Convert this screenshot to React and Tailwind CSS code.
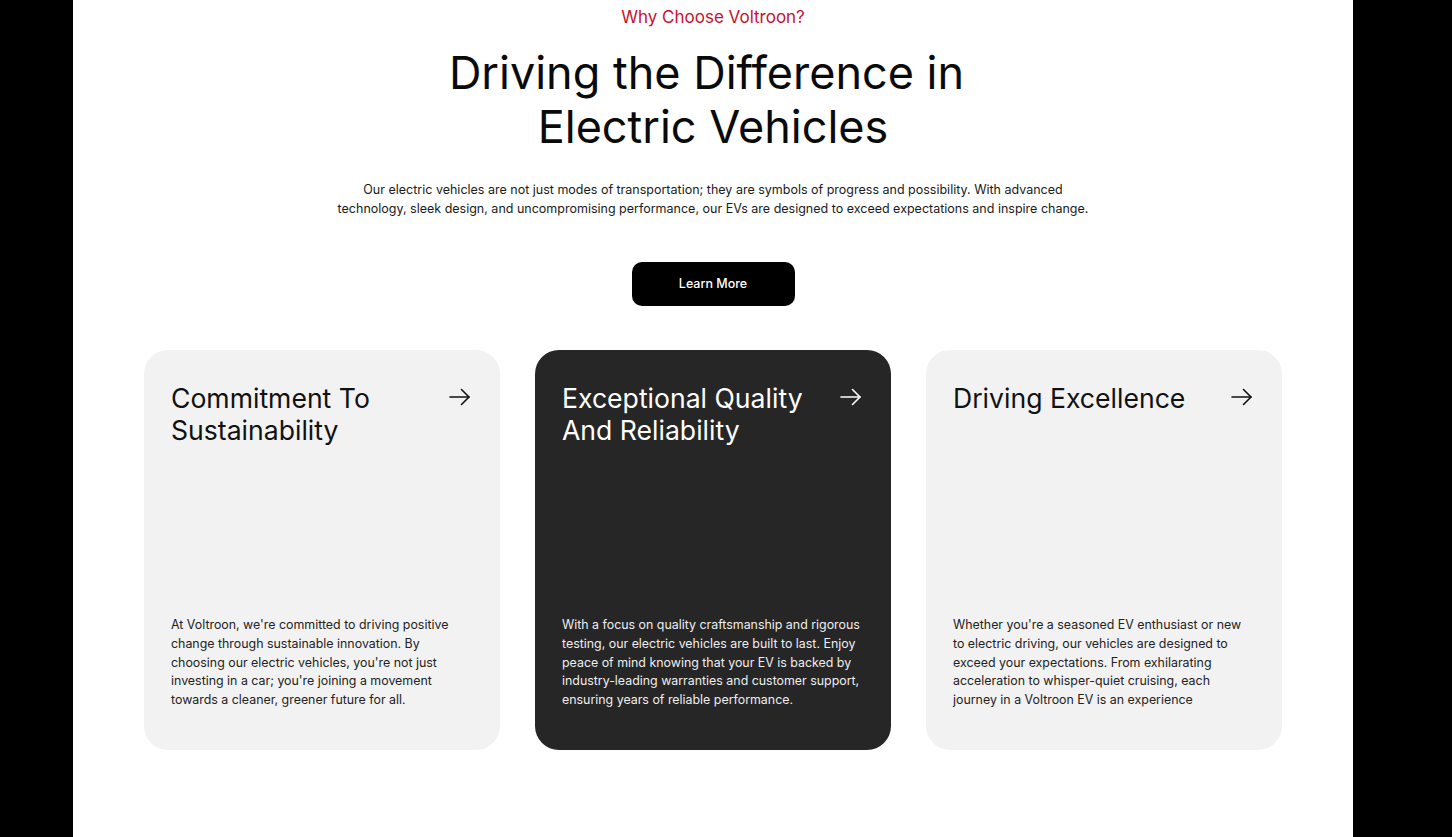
import React from 'react';

const cards = [
  {
    title: ['Commitment To', 'Sustainability'],
    text: "At Voltroon, we're committed to driving positive change through sustainable innovation. By choosing our electric vehicles, you're not just investing in a car; you're joining a movement towards a cleaner, greener future for all.",
    dark: false,
  },
  {
    title: ['Exceptional Quality', 'And Reliability'],
    text: 'With a focus on quality craftsmanship and rigorous testing, our electric vehicles are built to last. Enjoy peace of mind knowing that your EV is backed by industry-leading warranties and customer support, ensuring years of reliable performance.',
    dark: true,
  },
  {
    title: ['Driving Excellence'],
    text: "Whether you're a seasoned EV enthusiast or new to electric driving, our vehicles are designed to exceed your expectations. From exhilarating acceleration to whisper-quiet cruising, each journey in a Voltroon EV is an experience",
    dark: false,
  },
];

function Arrow() {
  return (
    <svg width="22" height="18" viewBox="0 0 22 18" fill="none" stroke="currentColor" strokeWidth="1.6" strokeLinecap="round" strokeLinejoin="round" className="flex-shrink-0 mt-[6px]">
      <path d="M1 9h19" />
      <path d="M12.5 1.5L20 9l-7.5 7.5" />
    </svg>
  );
}

function Card({ card }) {
  return (
    <div
      className={`h-[400px] rounded-[24px] pl-[27px] pr-[29px] pt-[32px] pb-[40px] flex flex-col justify-between ${
        card.dark ? 'bg-[#262626] text-white' : 'bg-[#f2f2f2] text-[#111]'
      }`}
    >
      <div className="flex items-start justify-between">
        <h3 className="text-[26.6px] leading-[32px] font-normal">
          {card.title.map((t) => (
            <span key={t} className="block">{t}</span>
          ))}
        </h3>
        <Arrow />
      </div>
      <p className={`text-[12.4px] leading-[18.8px] -mr-[1px] ${card.dark ? 'text-[#eeeeee]' : 'text-[#222]'}`}>
        {card.text}
      </p>
    </div>
  );
}

export default function App() {
  return (
    <div className="flex min-h-[837px] bg-black" style={{ fontFamily: 'Inter, "Noto Sans", sans-serif' }}>
      <div className="w-[73px] flex-shrink-0" />
      <main className="w-[1280px] flex-shrink-0 bg-white flex flex-col items-center pt-[6px]">
        <p className="text-[17px] leading-[22px] text-[#c8102e]">Why Choose Voltroon?</p>
        <h1 className="mt-[18px] text-[45px] leading-[54px] text-[#0a0a0a] text-center font-normal">
          <span className="block pr-[13px]">Driving the Difference in</span>
          <span className="block">Electric Vehicles</span>
        </h1>
        <p className="mt-[26px] text-[12.5px] leading-[19px] text-[#1a1a1a] text-center">
          Our electric vehicles are not just modes of transportation; they are symbols of progress and possibility. With advanced
          <br />
          technology, sleek design, and uncompromising performance, our EVs are designed to exceed expectations and inspire change.
        </p>
        <button className="mt-[44px] w-[163px] h-[44px] rounded-[10px] bg-black text-white text-[12.5px] font-medium">
          Learn More
        </button>
        <div className="mt-[44px] w-[1138px] grid grid-cols-3 gap-[35px]">
          {cards.map((c) => (
            <Card key={c.title[0]} card={c} />
          ))}
        </div>
      </main>
      <div className="flex-1" />
    </div>
  );
}
